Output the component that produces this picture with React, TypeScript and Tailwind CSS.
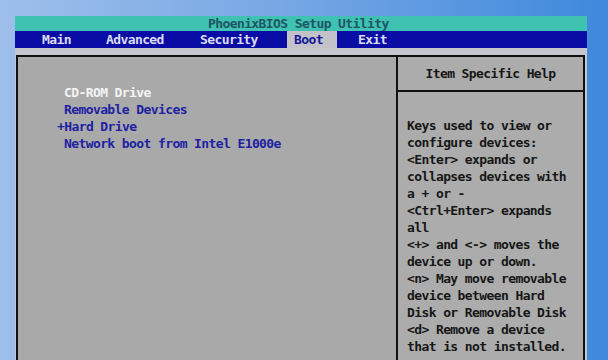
import React from "react";

const mono = "font-['DejaVu_Sans_Mono','Liberation_Mono',monospace] text-[13px] tracking-[-0.6px] font-bold";

export default function App() {
  const help = [
    "Keys used to view or",
    "configure devices:",
    "<Enter> expands or",
    "collapses devices with",
    "a + or -",
    "<Ctrl+Enter> expands",
    "all",
    "<+> and <-> moves the",
    "device up or down.",
    "<n> May move removable",
    "device between Hard",
    "Disk or Removable Disk",
    "<d> Remove a device",
    "that is not installed.",
  ];
  return (
    <div className="w-[608px] h-[360px] overflow-hidden bg-[linear-gradient(90deg,#9ebfeb_0%,#78a8e4_45%,#3e89dc_100%)] pl-[15px] pt-[16px]">
      <div className={`w-[572px] h-[344px] flex flex-col ${mono}`}>
        <div className="h-[15px] bg-[#3fc2b2] text-[#1d5566] leading-[15px] pl-[193px] whitespace-pre">
          PhoenixBIOS Setup Utility
        </div>
        <div className="h-[17px] bg-[#0a0ca6] text-[#dcdcf4] leading-[17px] flex whitespace-pre">
          <span className="w-[91px] pl-[27px]">Main</span>
          <span className="w-[94px]">Advanced</span>
          <span className="w-[87px]">Security</span>
          <span className="w-[50px] pl-[7px] bg-[#c2c2c8] text-[#14189a]">Boot</span>
          <span className="pl-[21px]">Exit</span>
        </div>
        <div className="flex-1 bg-[#c6c6ce] pt-[7px] pl-[1px] pr-[2px]">
          <div className="h-full border-2 border-b-0 border-[#101010] bg-[#a9a9a9] flex">
            <div className="w-[380px] border-r-2 border-[#101010] pt-[27px] pl-[46px] leading-[17px] text-[#1c22a2] whitespace-pre">
              <div className="text-[#f4f4f4]">CD-ROM Drive</div>
              <div>Removable Devices</div>
              <div className="-ml-[7px]">+Hard Drive</div>
              <div>Network boot from Intel E1000e</div>
            </div>
            <div className="flex-1 flex flex-col bg-[#acacac] text-[#161616]">
              <div className="h-[35px] border-b-2 border-[#101010] flex items-center justify-center">
                Item Specific Help
              </div>
              <div className="pt-[25px] pl-[9px] leading-[17px] whitespace-pre">
                {help.map((l, i) => (
                  <div key={i}>{l}</div>
                ))}
              </div>
            </div>
          </div>
        </div>
      </div>
    </div>
  );
}
